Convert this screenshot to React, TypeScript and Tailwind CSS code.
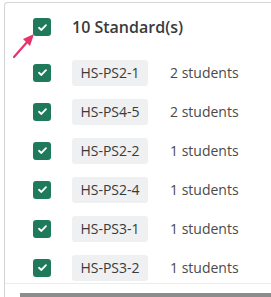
import React from 'react';

const rows = [
  { code: 'HS-PS2-1', count: 2 },
  { code: 'HS-PS4-5', count: 2 },
  { code: 'HS-PS2-2', count: 1 },
  { code: 'HS-PS2-4', count: 1 },
  { code: 'HS-PS3-1', count: 1 },
  { code: 'HS-PS3-2', count: 1 },
  { code: 'HS-PS3-3', count: 1 },
];

const Check = () => (
  <div className="w-[18px] h-[18px] rounded-[3px] bg-[#1f7a5c] flex items-center justify-center shrink-0">
    <svg width="11" height="11" viewBox="0 0 12 12" fill="none">
      <path d="M2.2 6.3 L4.8 8.7 L9.8 3.4" stroke="white" strokeWidth="2" strokeLinecap="round" strokeLinejoin="round" />
    </svg>
  </div>
);

export default function App() {
  return (
    <div
      className="relative w-[271px] h-[297px] overflow-hidden bg-white"
      style={{ fontFamily: '"Open Sans", sans-serif' }}
    >
      <div className="ml-[4px] mt-[2px] h-[320px] border-l border-t border-[#d4d4d4] rounded-tl-[4px] pl-[28px] pt-[15px]">
        {/* Header */}
        <div className="flex items-center gap-[21px] h-[18px]">
          <Check />
          <span className="text-[16px] font-semibold text-[#3a3a3a] whitespace-nowrap">10 Standard(s)</span>
        </div>

        {/* List */}
        <div className="mt-[17px]">
          {rows.map((r) => (
            <div key={r.code} className="flex items-center h-[39px]">
              <Check />
              <span className="ml-[21px] w-[76px] h-[26px] rounded-[3px] bg-[#eef0f2] text-[14px] text-[#3a3a3a] flex items-center justify-center whitespace-nowrap">
                {r.code}
              </span>
              <span className="ml-[22px] text-[14px] text-[#4a4a4a] whitespace-nowrap">{r.count} students</span>
            </div>
          ))}
        </div>
      </div>

      {/* Pointer arrow */}
      <svg className="absolute left-0 top-0" width="50" height="70" viewBox="0 0 50 70">
        <path d="M14 57 L28 41" stroke="#e8336b" strokeWidth="2.2" strokeLinecap="round" />
        <path d="M34 34 L23 39 L30 46 Z" fill="#e8336b" />
      </svg>

      {/* Bottom fade + scrollbar */}
      <div className="absolute left-[5px] right-0 top-[283px] bottom-0 bg-white/80 border-t border-[#ececec]" />
      <div className="absolute left-[20px] right-0 bottom-0 h-[4px] bg-[#8c8c8c]" />
    </div>
  );
}
